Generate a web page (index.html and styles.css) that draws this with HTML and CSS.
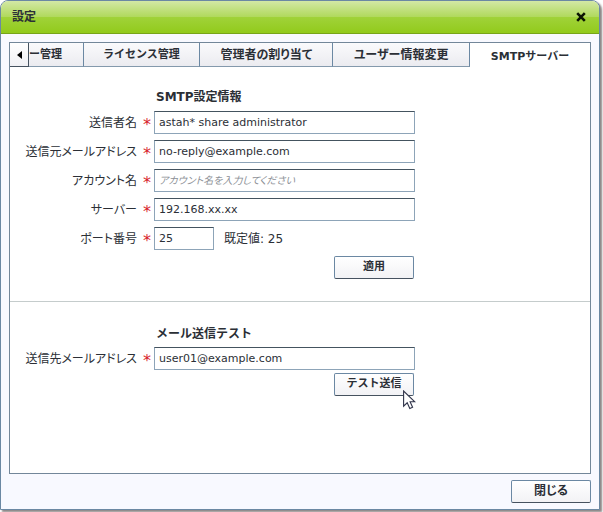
FILE: index.html
```html
<!DOCTYPE html>
<html lang="ja">
<head>
<meta charset="utf-8">
<meta name="viewport" content="width=device-width, initial-scale=1">
<title>設定</title>
<link rel="stylesheet" href="styles.css">
</head>
<body>
<section class="dialog" role="dialog" aria-labelledby="dialog-title">
  <header class="titlebar">
    <h1 class="title" id="dialog-title">設定</h1>
    <button class="close-icon" type="button" aria-label="閉じる">
      <svg width="10" height="10" viewBox="0 0 10 10"><path d="M1.2 1.2 8.8 8.8M8.8 1.2 1.2 8.8" fill="none" stroke="#0c1404" stroke-width="2.6"/></svg>
    </button>
  </header>

  <main class="panel">
    <div class="tabs" role="tablist">
      <button class="tab-scroll" type="button" aria-label="前のタブ">
        <svg width="5" height="8" viewBox="0 0 5 8"><path d="M5 0v8L0 4z" fill="#000"/></svg>
      </button>
      <button class="tab tab-clipped" type="button" role="tab">ー管理</button>
      <button class="tab" type="button" role="tab">ライセンス管理</button>
      <button class="tab tab-wide" type="button" role="tab">管理者の割り当て</button>
      <button class="tab tab-wider" type="button" role="tab">ユーザー情報変更</button>
      <button class="tab tab-active" type="button" role="tab" aria-selected="true">SMTPサーバー</button>
    </div>

    <form class="form">
      <h2 class="heading">SMTP設定情報</h2>
      <div class="row">
        <label class="label" for="sender">送信者名</label>
        <span class="required">*</span>
        <input class="field" id="sender" type="text" value="astah* share administrator">
      </div>
      <div class="row">
        <label class="label" for="from">送信元メールアドレス</label>
        <span class="required">*</span>
        <input class="field" id="from" type="text" value="no-reply@example.com">
      </div>
      <div class="row">
        <label class="label" for="account">アカウント名</label>
        <span class="required">*</span>
        <input class="field" id="account" type="text" placeholder="アカウント名を入力してください">
      </div>
      <div class="row">
        <label class="label" for="server">サーバー</label>
        <span class="required">*</span>
        <input class="field" id="server" type="text" value="192.168.xx.xx">
      </div>
      <div class="row">
        <label class="label" for="port">ポート番号</label>
        <span class="required">*</span>
        <div class="port">
          <input class="field field-short" id="port" type="text" value="25">
          <span class="hint">既定値: 25</span>
        </div>
      </div>
      <div class="actions"><button class="button" type="button">適用</button></div>
    </form>

    <form class="form form-test">
      <h2 class="heading">メール送信テスト</h2>
      <div class="row">
        <label class="label" for="to">送信先メールアドレス</label>
        <span class="required">*</span>
        <input class="field" id="to" type="text" value="user01@example.com">
      </div>
      <div class="actions actions-test">
        <button class="button" type="button">テスト送信</button>
        <svg class="pointer" width="13" height="20" viewBox="0 0 13 20"><path d="M.6 1v15.2l3.6-3.4 2.6 5.7 2.8-1.2-2.5-5.5h4.7z" fill="#fff" stroke="#30344a" stroke-width="1.1"/></svg>
      </div>
    </form>
  </main>

  <footer class="footer"><button class="button button-large" type="button">閉じる</button></footer>
</section>
</body>
</html>
```
FILE: styles.css
```css
* {
  box-sizing: border-box;
}

body {
  margin: 0;
  min-height: 100vh;
  display: flex;
  padding: 0 3px 2px 0;
  background: #fff;
  color: #2b2f36;
  font: 12px/16px "DejaVu Sans", "Noto Sans CJK JP", sans-serif;
}

button,
input {
  font: inherit;
  color: inherit;
  margin: 0;
}

.dialog {
  flex: 1;
  display: flex;
  flex-direction: column;
  min-width: 0;
  border: 1px solid #6b88a3;
  border-radius: 8px 8px 0 0;
  background: #f8f9ff;
  box-shadow: 2px 2px 2px #8c8787;
}

.titlebar {
  display: flex;
  align-items: center;
  justify-content: space-between;
  height: 33px;
  padding: 0 13px 0 11px;
  border-bottom: 1px solid #77a41a;
  border-radius: 7px 7px 0 0;
  background: linear-gradient(#d3e8a5, #b0d95c 50%, #a0d239 51%, #92ca1c);
}

.title {
  margin: 0;
  font-size: 12px;
  line-height: 16px;
}

.close-icon {
  display: flex;
  padding: 0;
  border: 0;
  background: none;
}

.panel {
  flex: 1;
  margin: 8px 8px 0;
  border: 1px solid #73879a;
  background: #fff;
}

.tabs {
  display: flex;
  height: 24px;
}

.tab,
.tab-scroll {
  padding: 0;
  border: 0;
  border-right: 1px solid #6b88a3;
  border-bottom: 1px solid #8499ac;
  background: linear-gradient(#fafafc, #ebebf0);
}

.tab-scroll {
  display: flex;
  align-items: center;
  justify-content: center;
  flex: 0 0 19px;
  border-color: #46525f;
  background: linear-gradient(#fff, #f0f0f4);
}

.tab {
  flex: 117 1 0;
  font-size: 11px;
  font-weight: 700;
  white-space: nowrap;
}

.tab-clipped {
  flex: 54 1 0;
  text-align: left;
}

.tab-wide,
.tab-wider {
  flex-grow: 133;
  font-size: 12px;
  font-feature-settings: "palt";
}

.tab-wider {
  flex-grow: 137;
}

.tab-active {
  flex-grow: 121;
  padding-top: 4px;
  border: 0;
  background: #fff;
}

.form {
  display: flex;
  flex-direction: column;
  gap: 6px;
  padding: 22px 0 22px 15px;
}

.form-test {
  padding-top: 24px;
  border-top: 1px solid #c5cccc;
}

.form-test .row {
  margin: -1px 0 -3px;
}

.heading {
  margin: 0 0 0 131px;
  font-size: 12px;
  line-height: 16px;
}

.row {
  display: grid;
  grid-template-columns: 112px 17px minmax(0, 261px);
  align-items: center;
}

.label {
  text-align: right;
  white-space: nowrap;
  font-feature-settings: "palt";
}

.required {
  padding-top: 4px;
  padding-left: 3px;
  text-align: center;
  color: #d8232c;
  font-size: 16px;
  line-height: 16px;
}

.field {
  width: 100%;
  height: 23px;
  padding: 0 4px 1px;
  border: 1px solid #8da4b8;
  border-top-color: #44535f;
  background: #fff;
  font-size: 11px;
}

.field::placeholder {
  color: #8c9096;
  font-style: italic;
  font-size: 10px;
  font-feature-settings: "palt";
  opacity: 1;
}

.port {
  display: flex;
  align-items: center;
  gap: 10px;
}

.field-short {
  width: 60px;
}

.hint {
  white-space: nowrap;
}

.actions {
  display: flex;
  justify-content: flex-end;
  max-width: 389px;
}

.actions-test {
  position: relative;
}

.button {
  width: 80px;
  height: 23px;
  padding: 0 0 1px;
  border: 1px solid #6b88a3;
  border-bottom-color: #46525f;
  border-radius: 2px;
  background: linear-gradient(#fff, #f2f2f5);
  font-size: 11px;
  font-weight: 700;
}

.button-large {
  font-size: 12px;
  font-feature-settings: "palt";
}

.pointer {
  position: absolute;
  right: -2px;
  top: 17px;
}

.footer {
  display: flex;
  justify-content: flex-end;
  padding: 6px 8px;
}
```
